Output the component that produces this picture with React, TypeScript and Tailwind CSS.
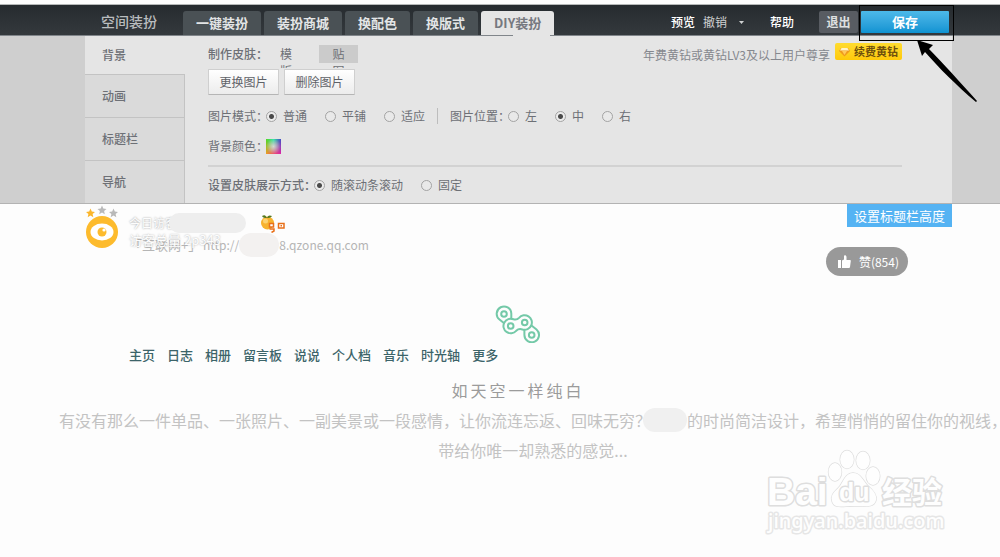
import { useState } from 'react';

const tabs = ['一键装扮', '装扮商城', '换配色', '换版式', 'DIY装扮'];
const sections = ['背景', '动画', '标题栏', '导航'];
const navLinks = ['主页', '日志', '相册', '留言板', '说说', '个人档', '音乐', '时光轴', '更多'];

type RadioProps = {
  name: string;
  label: string;
  value: string;
  onChange: (value: string) => void;
};

function Radio({ name, label, value, onChange }: RadioProps) {
  return (
    <label className="flex items-center gap-[6px] cursor-pointer">
      <input
        type="radio"
        name={name}
        checked={value === label}
        onChange={() => onChange(label)}
        className="appearance-none w-[11px] h-[11px] rounded-full border border-[#a3a3a3] bg-[#e9e9e9] checked:bg-[radial-gradient(circle,#4a4a4a_2px,#ececec_3px)]"
      />
      {label}
    </label>
  );
}

function Header() {
  const [active, setActive] = useState('DIY装扮');

  return (
    <header className="relative h-8 mt-1 border-t border-[#b5b8b8] border-b border-b-[#80858a] bg-linear-to-b from-[#262b2f] to-[#34393d] pl-[101px] pr-[51px] flex items-end">
      <h1 className="w-[82px] shrink-0 text-sm leading-7 font-medium text-[#b9bcbe]">空间装扮</h1>
      <nav className="flex items-end gap-[3px]">
        {tabs.map((tab) => (
          <button
            key={tab}
            onClick={() => setActive(tab)}
            className={`relative h-6 px-[13px] rounded-t-[3px] text-[13px] leading-6 font-bold whitespace-nowrap ${
              active === tab
                ? 'bg-[#e5e5e5] text-[#76787f]'
                : 'bg-[#4a5155] text-[#e3e5e6]'
            }`}
          >
            {tab}
            {active === tab && (
              <span className="absolute left-8 right-1 -bottom-px h-px bg-[#e5e5e5]"></span>
            )}
          </button>
        ))}
      </nav>

      {/* Actions */}
      <div className="ml-auto flex items-center pb-[2px] text-xs text-white whitespace-nowrap">
        <button className="mr-2 font-medium">预览</button>
        <button className="flex items-center text-[#d0d2d3]">
          撤销
          <svg width="5" height="3" viewBox="0 0 5 3" className="ml-3">
            <path d="M0 0H5L2.5 3Z" fill="#d0d2d3" />
          </svg>
        </button>
        <button className="ml-[26px] mr-[25px] font-medium">帮助</button>
        <button className="relative w-[39px] h-[22px] mr-[3px] rounded-[2px] bg-[#585c62] font-bold text-[#dfe0e1]">
          退出
        </button>
        <button className="relative w-[88px] h-[22px] rounded-[1px] bg-linear-to-b from-[#4cb9e9] to-[#0c93d2] text-[13px] font-bold">
          保存
          <span className="absolute -left-[2px] -right-[5px] -top-[6px] -bottom-2 border border-black"></span>
        </button>
      </div>

      {/* Pointer to the save button */}
      <svg width="64" height="64" viewBox="0 0 64 64" className="absolute right-5 top-[34px]">
        <path
          d="M1 1L17 6L13 10C26 23 44 43 61 62L60 63C41 47 23 29 9 13L6 17Z"
          fill="#000"
        />
      </svg>
    </header>
  );
}

function SkinPanel() {
  const [mode, setMode] = useState('普通');
  const [place, setPlace] = useState('中');
  const [scroll, setScroll] = useState('随滚动条滚动');

  return (
    <div className="bg-[#cfcfcf] border-b border-[#b3b3b3] pl-[85px] pr-12">
      <div className="flex bg-[#e5e5e5] text-xs text-[#6d7076]">
        {/* Section list */}
        <nav className="w-[100px] shrink-0 flex flex-col text-left">
          {sections.map((item, i) => (
            <button
              key={item}
              className={`pl-[17px] text-left font-medium ${
                i === 0
                  ? 'h-[38px]'
                  : 'h-[43px] bg-[#dadada] border-t border-r border-[#c3c3c3]'
              }`}
            >
              {item}
            </button>
          ))}
        </nav>

        <div className="flex-1 pl-[23px] pr-[50px] pt-[9px] whitespace-nowrap">
          <div className="flex items-start h-6">
            <span className="w-[72px] leading-[18px] font-medium">制作皮肤：</span>
            <button className="w-3 h-[23px] mr-[27px] overflow-hidden whitespace-normal leading-[17px]">
              模版
            </button>
            <button className="w-[39px] h-[23px] px-[13px] overflow-hidden whitespace-normal leading-[17px] bg-[linear-gradient(#cbcbcb_18px,transparent_18px)]">
              贴图
            </button>
            <div className="ml-auto flex items-start">
              <span className="mr-[5px] leading-5 text-[#85888e]">
                年费黄钻或黄钻LV3及以上用户尊享
              </span>
              <button className="flex items-center -mt-[2px] h-[17px] px-1 gap-1 rounded-[2px] bg-linear-to-b from-[#ffdc2e] to-[#ffc907] text-[11px] font-bold text-[#6e4f0c]">
                <svg width="11" height="10" viewBox="0 0 11 10">
                  <path d="M2 1H9L11 4L5.5 9.5L0 4Z" fill="#f09a1c" />
                  <path d="M2.5 1H8.5L10 3.5H1Z" fill="#fff3c4" />
                  <path d="M3 4H8L5.5 8Z" fill="#ffc95a" />
                </svg>
                续费黄钻
              </button>
            </div>
          </div>

          <div className="flex gap-[5px] mb-3">
            {['更换图片', '删除图片'].map((label) => (
              <button
                key={label}
                className="w-[71px] h-[26px] bg-linear-to-b from-white to-[#ececec] border border-[#cfcfcf] border-b-[#b5b5b5] rounded-[1px] text-[#5f6268]"
              >
                {label}
              </button>
            ))}
          </div>

          <div className="flex items-center h-[18px] mb-3">
            <span className="-mr-[2px]">图片模式：</span>
            <div className="flex gap-[18px]">
              {['普通', '平铺', '适应'].map((label) => (
                <Radio key={label} name="mode" label={label} value={mode} onChange={setMode} />
              ))}
            </div>
            <span className="w-px h-4 bg-[#bdbdbd] mx-3"></span>
            <span className="-mr-[2px]">图片位置：</span>
            <div className="flex gap-[18px]">
              {['左', '中', '右'].map((label) => (
                <Radio key={label} name="place" label={label} value={place} onChange={setPlace} />
              ))}
            </div>
          </div>

          <div className="flex items-center h-[18px]">
            <span className="-mr-[2px]">背景颜色：</span>
            <button aria-label="背景颜色">
              <svg width="15" height="15" viewBox="0 0 15 15">
                <defs>
                  <linearGradient id="hueTop">
                    <stop offset="0" stopColor="#4fdb1e" />
                    <stop offset=".5" stopColor="#2fe8a8" />
                    <stop offset="1" stopColor="#4048c8" />
                  </linearGradient>
                  <linearGradient id="hueBottom">
                    <stop offset="0" stopColor="#f0a020" />
                    <stop offset=".5" stopColor="#f0506a" />
                    <stop offset="1" stopColor="#e020a8" />
                  </linearGradient>
                  <linearGradient id="fade" x2="0" y2="1">
                    <stop offset="0" stopColor="#000" />
                    <stop offset="1" stopColor="#fff" />
                  </linearGradient>
                  <radialGradient id="glow">
                    <stop offset="0" stopColor="#fff" stopOpacity=".6" />
                    <stop offset="1" stopColor="#fff" stopOpacity="0" />
                  </radialGradient>
                  <mask id="lower">
                    <rect width="15" height="15" fill="url(#fade)" />
                  </mask>
                </defs>
                <rect width="15" height="15" fill="url(#hueTop)" />
                <rect width="15" height="15" fill="url(#hueBottom)" mask="url(#lower)" />
                <rect width="15" height="15" fill="url(#glow)" />
              </svg>
            </button>
          </div>

          <hr className="mt-[10px] mb-[9px] border-t-2 border-[#d2d2d2]" />

          <div className="flex items-center h-[18px]">
            <span className="-mr-[2px] font-medium">设置皮肤展示方式：</span>
            <div className="flex gap-[18px]">
              {['随滚动条滚动', '固定'].map((label) => (
                <Radio key={label} name="scroll" label={label} value={scroll} onChange={setScroll} />
              ))}
            </div>
          </div>
        </div>
      </div>
    </div>
  );
}

function Profile() {
  return (
    <div className="flex items-start pl-[85px] pr-12 h-[88px]">
      {/* Avatar */}
      <svg width="34" height="44" viewBox="0 0 34 44" className="shrink-0">
        <path d="M5.5 4.5L6.8 7.6L10 7.9L7.6 10L8.3 13.2L5.5 11.5L2.7 13.2L3.4 10L1 7.9L4.2 7.6Z" fill="#fbb62c" />
        <path d="M17 1.5L18.3 4.6L21.5 4.9L19.1 7L19.8 10.2L17 8.5L14.2 10.2L14.9 7L12.5 4.9L15.7 4.6Z" fill="#b9b9b9" />
        <path d="M28.5 4.5L29.8 7.6L33 7.9L30.6 10L31.3 13.2L28.5 11.5L25.7 13.2L26.4 10L24 7.9L27.2 7.6Z" fill="#b9b9b9" />
        <circle cx="17" cy="28" r="16" fill="#fdbb2d" />
        <ellipse cx="17" cy="28" rx="11.5" ry="8.5" fill="#fff" />
        <circle cx="17" cy="28" r="4.5" fill="#fdbb2d" />
        <circle cx="19" cy="26" r="1.6" fill="#fff" />
      </svg>

      <div className="relative ml-[10px] pt-[9px] text-xs leading-5 text-[#b5b5b5] whitespace-nowrap">
        <div className="flex items-center">
          <span className="w-10 text-[#fdfdfd] [text-shadow:0_0_2px_#8f8f8f]">今日访客</span>
          <span className="relative w-[77px] h-5 rounded-full bg-[#eeeeee]"></span>
          {/* Level badge */}
          <svg width="28" height="20" viewBox="0 0 28 20" className="ml-[13px]">
            <circle cx="8.5" cy="10" r="6.5" fill="#f7b22e" />
            <circle cx="6.5" cy="8" r="2.5" fill="#fcd271" />
            <path d="M3 3C6 1 7 3 8 5C9 2 11 2 13 3C12 5 9 5 8 5C6 5 4 5 3 3Z" fill="#55781f" />
            <path
              d="M10.5 10.500H14.500V14H10.500ZM10.500 16H15V18L12.500 19.500M19.500 10.500H25V15H19.500ZM21.500 12.700H23"
              fill="#fff"
              stroke="#e8701a"
              strokeWidth="1.5"
            />
          </svg>
        </div>
        <div className="flex items-center h-6">
          <span className="w-[74px] text-[13px]">「互联网+」</span>
          <a href="#" className="flex items-center">
            http://
            <span className="w-10 h-6 rounded-full bg-[#f3f1f0]"></span>
            8.qzone.qq.com
          </a>
        </div>
        <span className="absolute left-0 top-[26px] text-[13px] text-[#fdfdfd] [text-shadow:0_0_2px_#a5a5a5]">
          访客总量 2p343
        </span>
      </div>

      <div className="ml-auto flex flex-col items-end">
        <button className="h-[23px] px-[7px] bg-[#55b3f3] text-[13px] leading-[23px] text-white whitespace-nowrap">
          设置标题栏高度
        </button>
        <button className="mt-5 mr-11 flex items-center gap-2 h-[29px] pl-3 pr-[9px] rounded-full bg-[#999] text-xs text-white whitespace-nowrap">
          <svg width="13" height="13" viewBox="0 0 13 13" fill="#fff">
            <path d="M0 5H3V13H0Z" />
            <path d="M4 5.5L6 4.5V1C6 0 8.5 0 8.5 2V5H12Q13 5 12.8 6L12 12Q11.8 13 11 13H4Z" />
          </svg>
          赞(854)
        </button>
      </div>
    </div>
  );
}

function ChainIcon() {
  return (
    <svg
      width="46"
      height="38"
      viewBox="0 0 46 38"
      fill="none"
      stroke="#74c9a8"
      strokeWidth="2"
      strokeLinecap="round"
    >
      <circle cx="9" cy="9" r="2.8" />
      <circle cx="15.7" cy="21" r="2.8" />
      <circle cx="29.7" cy="17.5" r="2.8" />
      <circle cx="36.7" cy="30" r="2.8" />
      <path d="M16.3 13.5V8.5A7.3 7.3 0 1 0 4.5 14.5L8.5 17.8" />
      <path d="M18.5 14.2A7.3 7.3 0 1 0 21.2 25.8C23 24 25 23.5 27.5 24.5A7.3 7.3 0 1 0 24 12.8C22.5 14.5 20.5 14.8 18.5 14.2" />
      <path d="M29.4 25.5V30A7.3 7.3 0 1 0 41.5 24.5L36.5 20.5" />
    </svg>
  );
}

function Watermark() {
  return (
    <svg
      width="184"
      height="90"
      viewBox="0 0 184 90"
      fill="#fefefe"
      stroke="#dedede"
      strokeWidth="3"
      strokeLinejoin="round"
      paintOrder="stroke"
      fontFamily="Liberation Sans, sans-serif"
      fontWeight="bold"
      className="absolute right-[52px] top-[244px]"
    >
      <text x="3" y="57" fontSize="39">Bai</text>
      <g strokeWidth="1.4">
        <ellipse cx="71" cy="24" rx="6.500" ry="9" />
        <ellipse cx="83" cy="11.500" rx="6.800" ry="9" />
        <ellipse cx="99" cy="12.500" rx="6.800" ry="9" />
        <ellipse cx="109" cy="28" rx="6.800" ry="9" />
        <path d="M89 25C97 25 99 33 104 38C110 43 113 47 112 52C110 60 102 58 90 58C78 58 70 61 68 53C66 46 72 43 76 38C80 32 82 25 89 25Z" />
      </g>
      <text x="75" y="53" fontSize="25">du</text>
      <text x="118" y="55" fontSize="30" fontFamily="Noto Sans CJK SC, sans-serif">
        经验
      </text>
      <text x="4" y="80" fontSize="20" fontFamily="Noto Sans, sans-serif" fontWeight="500" stroke="#e6e6e6">
        jingyan.baidu.com
      </text>
    </svg>
  );
}

export default function App() {
  return (
    <div className="min-h-screen overflow-hidden bg-[#fdfdfd] font-['Noto_Sans_CJK_SC',sans-serif]">
      <Header />
      <SkinPanel />

      <main className="relative">
        <Profile />

        <div className="flex justify-center pl-9 mt-[13px]">
          <ChainIcon />
        </div>

        <nav className="flex gap-3 pl-[129px] mt-[2px] text-[13px] leading-5 font-medium text-[#3c6469] whitespace-nowrap">
          {navLinks.map((link) => (
            <a key={link} href="#">
              {link}
            </a>
          ))}
        </nav>

        <h2 className="pl-9 mt-[10px] text-center text-base leading-[30px] tracking-[3px] text-[#9b9b9b]">
          如天空一样纯白
        </h2>
        <div className="flex flex-col items-center pl-[66px] text-base leading-[30px] text-[#c3c3c3] whitespace-nowrap">
          <p className="flex items-center">
            有没有那么一件单品、一张照片、一副美景或一段感情，让你流连忘返、回味无穷？
            <span className="-ml-2 w-11 h-6 rounded-full bg-[#f0f0f0]"></span>
            的时尚简洁设计，希望悄悄的留住你的视线，
          </p>
          <p>带给你唯一却熟悉的感觉...</p>
        </div>

        <Watermark />
      </main>
    </div>
  );
}
